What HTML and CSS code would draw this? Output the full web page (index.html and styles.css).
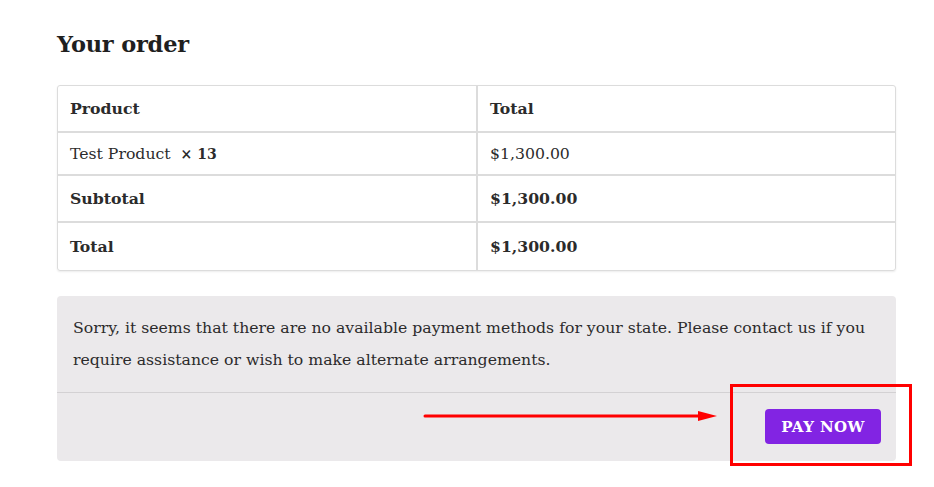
FILE: index.html
```html
<!DOCTYPE html>
<html>
<head>
<meta charset="utf-8">
<link rel="stylesheet" href="styles.css">
</head>
<body>
<div class="page">
  <h3 class="title">Your order</h3>
  <table class="order">
    <thead>
      <tr><th class="c1">Product</th><th>Total</th></tr>
    </thead>
    <tbody>
      <tr class="item"><td class="c1">Test Product&nbsp; <strong class="qty">× 13</strong></td><td>$1,300.00</td></tr>
    </tbody>
    <tfoot>
      <tr class="sub"><th class="c1">Subtotal</th><td><strong>$1,300.00</strong></td></tr>
      <tr class="tot"><th class="c1">Total</th><td><strong>$1,300.00</strong></td></tr>
    </tfoot>
  </table>
  <div class="payment">
    <p class="notice">Sorry, it seems that there are no available payment methods for your state. Please contact us if you require assistance or wish to make alternate arrangements.</p>
    <div class="place">
      <button class="pay">PAY NOW</button>
    </div>
    <svg class="arrow" width="300" height="14" viewBox="0 0 300 14">
      <line x1="2" y1="7" x2="280" y2="7" stroke="#f00" stroke-width="3" stroke-linecap="round"/>
      <polygon points="275,2 294,7 275,12" fill="#f00"/>
    </svg>
    <div class="highlight"></div>
  </div>
</div>
</body>
</html>
```
FILE: styles.css
```css
html, body { margin: 0; padding: 0; background: #fff; }
body {
  font-family: "DejaVu Serif", "Liberation Serif", serif;
  color: #2b2b2b;
}
.page {
  width: 839px;
  margin-left: 57px;
  padding-top: 29px;
  padding-bottom: 30px;
}
.title {
  margin: 0 0 26px 0;
  font-size: 22.5px;
  font-weight: bold;
  line-height: 30px;
  color: #1f1f1f;
  letter-spacing: -0.2px;
}
.order {
  width: 100%;
  border-collapse: separate;
  border-spacing: 0;
  border: 1px solid #dcdcdc;
  border-radius: 3px;
  box-shadow: 0 1px 2px rgba(0,0,0,0.08);
  font-size: 15.7px;
  margin: 0;
}
.order th, .order td {
  text-align: left;
  padding: 0 12px;
  border-bottom: 2px solid #dcdcdc;
  font-weight: normal;
}
.order .c1 { width: 394px; border-right: 2px solid #dcdcdc; }
.order th { font-weight: bold; }
.order thead th { height: 45px; }
.order .item td { height: 41px; }
.order .sub th, .order .sub td { height: 45px; }
.order .tot th, .order .tot td { height: 47px; border-bottom: 0; }
.qty { font-size: 14px; }
.payment {
  position: relative;
  margin-top: 25px;
  background: #ebe9eb;
  border-radius: 4px;
}
.notice {
  margin: 0;
  padding: 16px 16px 16px 16px;
  font-size: 15.7px;
  line-height: 32px;
  color: #2b2b2b;
  border-bottom: 1px solid #d3d1d3;
}
.place {
  display: flex;
  justify-content: flex-end;
  padding: 16px 15px 17px 0;
}
.pay {
  background: #8224e3;
  color: #fff;
  border: 0;
  border-radius: 4px;
  width: 116px;
  height: 35px;
  font-family: "DejaVu Serif", serif;
  font-weight: bold;
  font-size: 15px;
  letter-spacing: 0.4px;
  padding: 0;
}
.arrow {
  position: absolute;
  left: 366px;
  top: 113px;
}
.highlight {
  position: absolute;
  left: 673px;
  top: 88px;
  width: 176px;
  height: 76px;
  border: 3px solid #f00;
}
```
